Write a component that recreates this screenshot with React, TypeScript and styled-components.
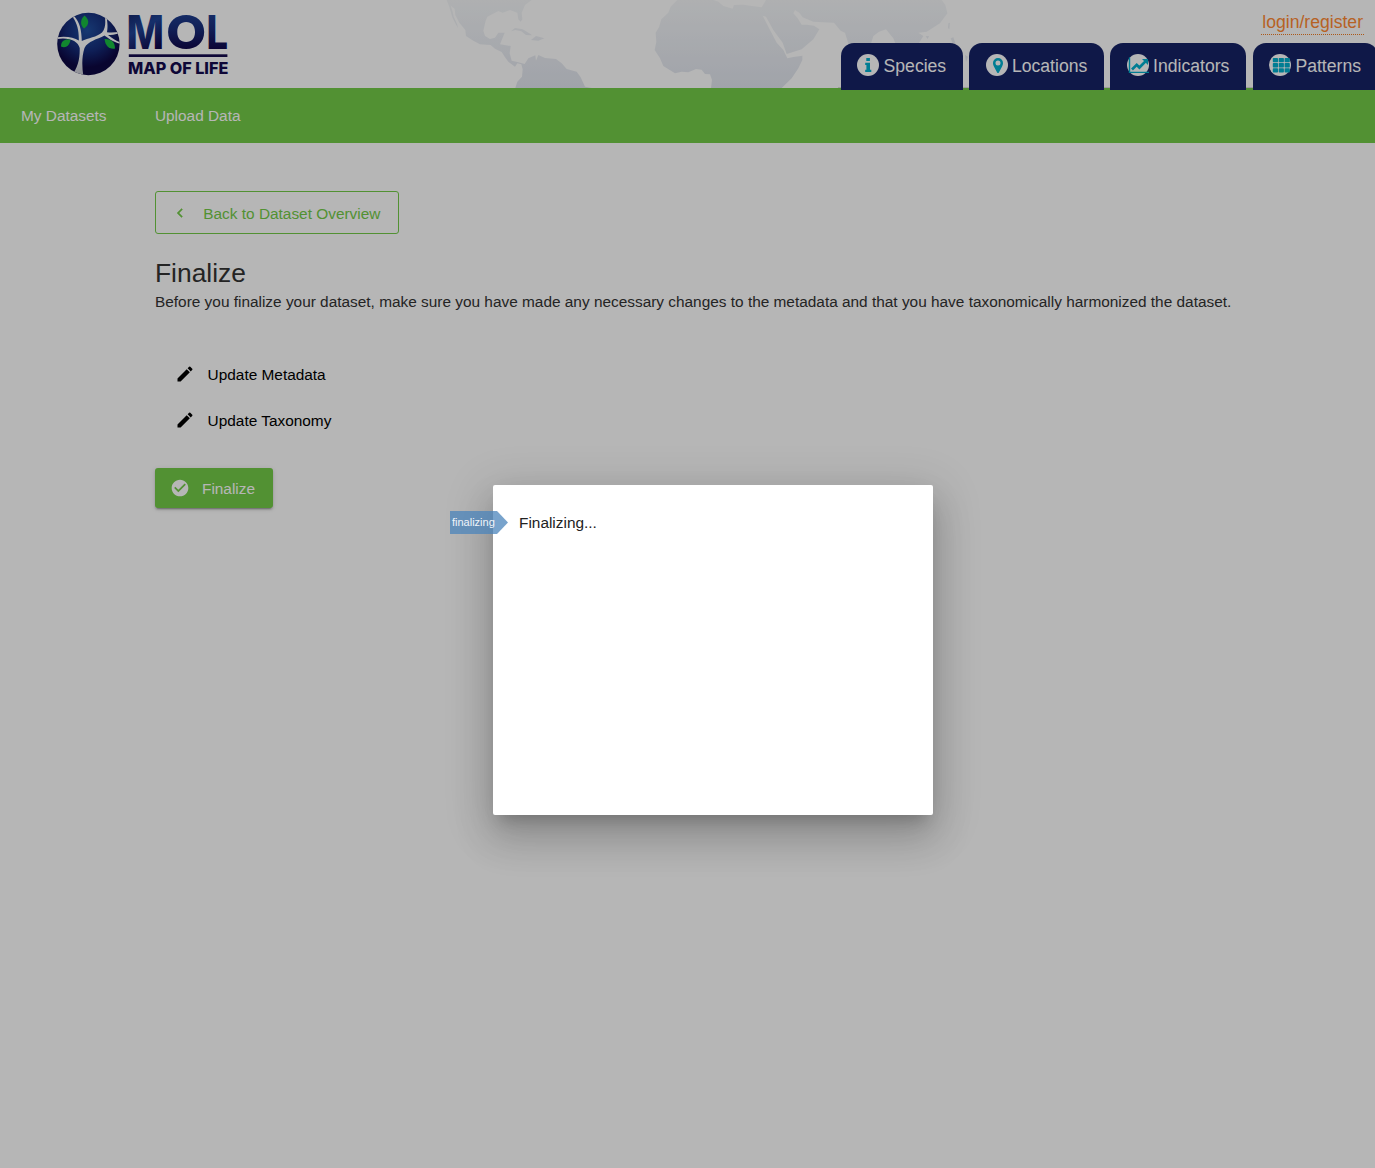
import React from "react";
import styled, { createGlobalStyle } from "styled-components";
import { MdCheckCircle, MdChevronLeft, MdEdit } from "react-icons/md";

const GREEN = "#73cc48";
const NAVY = "#152266";
const TEAL = "#00afcf";

const GlobalStyle = createGlobalStyle`
  *, *::before, *::after { box-sizing: border-box; }
  html, body { margin: 0; padding: 0; background: #fff; }
  body {
    font-family: "Liberation Sans", Arial, sans-serif;
    font-size: 15.4px;
    line-height: 20px;
    color: #333;
    overflow: hidden;
  }
`;

const Page = styled.div`
  position: relative;
  height: 1168px;
  overflow: hidden;
  background: #fff;
`;

const Header = styled.header`
  position: relative;
  display: flex;
  justify-content: space-between;
  height: 88px;
`;

const LogoLink = styled.a`
  display: block;
  padding-left: 53px;
  svg { display: block; overflow: visible; }
`;

const MapBackdrop = styled.svg`
  position: absolute;
  left: 430px;
  top: 0;
`;

const HeaderRight = styled.div`
  position: relative;
  z-index: 1;
  display: flex;
  flex-direction: column;
  align-items: flex-end;
  justify-content: space-between;
  width: 537px;
`;

const Login = styled.a`
  margin: 11px 11px 0 0;
  padding: 0 1px;
  height: 24px;
  line-height: 22px;
  font-size: 17.6px;
  color: #ff8a33;
  border-bottom: 1px dotted #f07c22;
`;

const Tabs = styled.nav`
  display: flex;
  gap: 6.4px;
  width: 100%;
  height: 45px;
  padding-left: 2.7px;
  border-bottom: 1px solid #ddd;
`;

const Tab = styled.a<{ $width: number }>`
  display: flex;
  align-items: center;
  flex: none;
  gap: 4.1px;
  width: ${(p) => p.$width}px;
  height: 47px;
  padding: 0 0 2px 16.8px;
  border-radius: 13px 13px 0 0;
  background: ${NAVY};
  color: #fff;
  font-size: 17.6px;
  svg { display: block; flex: none; overflow: visible; margin-top: -1px; }
`;

const NavBar = styled.nav`
  display: flex;
  align-items: center;
  gap: 48.4px;
  height: 55px;
  padding: 1px 21px 0;
  background: ${GREEN};
`;

const NavLink = styled.a`
  color: #fff;
`;

const Content = styled.main`
  display: flex;
  flex-direction: column;
  align-items: flex-start;
  padding: 48px 100px 0 155px;
`;

const BackButton = styled.button`
  display: flex;
  align-items: center;
  width: 244px;
  height: 43px;
  padding: 2px 0 0 15px;
  border: 1px solid ${GREEN};
  border-radius: 3px;
  background: transparent;
  color: ${GREEN};
  font: inherit;
  svg { margin: -2px 14.3px 0 0; }
  svg path:last-child { stroke: currentColor; stroke-width: 0.5px; }
`;

const Title = styled.h1`
  margin: 22px 0 0;
  font-size: 26.4px;
  line-height: 34px;
  font-weight: 400;
`;

const Lead = styled.p`
  margin: 2px 0 40px;
  white-space: nowrap;
`;

const EditLink = styled.a`
  display: flex;
  align-items: center;
  gap: 13px;
  height: 46px;
  padding: 0 19.6px;
  color: #000;
  svg { margin-top: -2px; }
`;

const FinalizeButton = styled.button`
  display: flex;
  align-items: center;
  width: 118px;
  height: 40px;
  margin-top: 24px;
  padding: 2px 0 0 14.6px;
  border: 0;
  border-radius: 3px;
  background: ${GREEN};
  color: #fff;
  font: inherit;
  box-shadow: 0 3px 1px -2px rgba(0, 0, 0, 0.2), 0 2px 2px 0 rgba(0, 0, 0, 0.14),
    0 1px 5px 0 rgba(0, 0, 0, 0.12);
  svg { margin: -3px 12.4px 0 0; }
`;

const Overlay = styled.div`
  position: absolute;
  inset: 0;
  z-index: 10;
  background: rgba(0, 0, 0, 0.288);
`;

const Dialog = styled.section`
  position: absolute;
  z-index: 11;
  left: 493px;
  top: 485px;
  width: 440px;
  height: 330px;
  padding: 28px 26px;
  border-radius: 2px;
  background: #fff;
  color: #222;
  box-shadow: 0 11px 15px -7px rgba(0, 0, 0, 0.2), 0 24px 38px 3px rgba(0, 0, 0, 0.14),
    0 9px 46px 8px rgba(0, 0, 0, 0.12);
`;

const StepFlag = styled.span`
  position: absolute;
  left: -43px;
  top: 26px;
  width: 58px;
  height: 23px;
  padding-left: 2px;
  background: rgba(75, 132, 187, 0.75);
  clip-path: polygon(0 0, 47px 0, 100% 50%, 47px 100%, 0 100%);
  color: #f0f5fa;
  font-size: 11px;
  line-height: 23px;
`;

function Logo() {
  return (
    <svg width="180" height="88" viewBox="53 0 180 88" aria-label="Map of Life">
      <defs>
        <radialGradient id="globe" cx="48%" cy="28%" r="66%">
          <stop offset="0" stopColor="#2050a0" />
          <stop offset="0.5" stopColor="#152d7b" />
          <stop offset="0.9" stopColor="#0d0743" />
        </radialGradient>
        <linearGradient id="word" gradientUnits="userSpaceOnUse" x1="130" y1="15" x2="150" y2="52">
          <stop offset="0" stopColor="#152a70" />
          <stop offset="0.4" stopColor="#1f4396" />
          <stop offset="1" stopColor="#100649" />
        </linearGradient>
        <linearGradient id="wordEnd" gradientUnits="userSpaceOnUse" x1="0" y1="15" x2="0" y2="50">
          <stop offset="0" stopColor="#1d3d8e" />
          <stop offset="0.4" stopColor="#182c7a" />
          <stop offset="1" stopColor="#100649" />
        </linearGradient>
        <linearGradient id="trunk" x1="0" y1="0" x2="0" y2="1">
          <stop offset="0.5" stopColor="#fff" />
          <stop offset="1" stopColor="#c3c5d0" />
        </linearGradient>
        <clipPath id="disc"><circle cx="88.4" cy="44" r="31.2" /></clipPath>
      </defs>
      <circle cx="88.4" cy="44" r="31.2" fill="url(#globe)" />
      <g clipPath="url(#disc)">
        <path
          fill="url(#trunk)"
          d="M71 76C78 68 80 58 79.700 48C78 41 69 37 57 39V37.300C66 35.800 74 37.500 78.800 40.500C79 31 77.500 24 73 17.500L74.500 16.500C80 23 81.500 30 81.800 41C88 38 97 37 102 32.500C106 28 105.500 21 104.800 16L106.500 17C108 24 107.500 29 107 32.300C112 32.800 116 32.300 120 31.800V33.300C115 34.700 111 35 108 35C112 38 116 41 120 42.300V43.700C113 42 108 38 104.500 35.500C97 39.500 88 41 84.500 48C81.500 57 82 68 83.500 77Z"
        />
      </g>
      <g fill="#18bd43">
        <path d="M84.500 15.500C79.500 20 80.500 26 84.200 28.500C89 25 90 20 84.500 15.500Z" />
        <path d="M61 46.500C61 40.500 65 38.800 70.500 39.800C69.500 46 65.500 48.500 61 46.500Z" />
        <path d="M104.500 39C111 38.500 115 42 115 48.500C109 49.500 105.500 46 104.500 39Z" />
      </g>
      <g fill="url(#wordEnd)" fontFamily="Inter, sans-serif" fontWeight="800">
        <g fontSize="46.5">
          <text x="126.500" y="49" textLength="37.500" lengthAdjust="spacingAndGlyphs" fill="url(#word)">M</text>
          <text x="166" y="49" textLength="40.300" lengthAdjust="spacingAndGlyphs">O</text>
          <text x="206.600" y="49" textLength="21.500" lengthAdjust="spacingAndGlyphs">L</text>
        </g>
        <rect x="128.800" y="54.300" width="98.600" height="2.700" fill="#140b4e" />
        <text x="128" y="74" fontSize="16.500" textLength="100.300" lengthAdjust="spacingAndGlyphs" fill="#140b4e">MAP OF LIFE</text>
      </g>
    </svg>
  );
}

function WorldMap() {
  return (
    <MapBackdrop width="560" height="88" viewBox="0 0 1680 264">
      <defs>
        <linearGradient id="land" gradientUnits="userSpaceOnUse" x1="0" y1="0" x2="0" y2="264">
          <stop offset="0" stopColor="#f5f7f9" />
          <stop offset="1" stopColor="#e1e5ee" />
        </linearGradient>
      </defs>
      <g fill="url(#land)">
        <path d="M54 0L60 16L74 26L76 45L88 68L106 90L108 108L130 122L150 133L182 135L195 146L215 156L225 172L235 185L255 200L262 190L274 193L278 208L276 230L262 245L256 264H485L465 260L452 232L440 215L410 207L395 190L378 177L345 174L325 165L318 182L316 166L295 175L284 192L262 186L245 182L239 160L242 138L210 133L224 98L205 98L195 113L180 117L165 108L160 92L167 62L172 50L205 33L218 38L240 30L262 38L265 58L272 65L277 58L275 38L285 15L305 0Z" />
        <path d="M50 0L58 20L67 52L76 70L84 84L81 72L71 50L68 36L63 20L58 0Z" />
        <path d="M243 94L255 84L278 88L300 101L306 106L288 105L274 94L256 90Z" />
        <path d="M303 120L318 108L343 115L325 122Z" />
        <path d="M742 0L722 20L715 38L694 58L687 82L677 98L679 125L674 150L690 175L700 198L735 220L755 215L775 217L798 207L815 209L825 222L840 223L846 240L843 264H1055L1085 235L1105 205L1117 180L1117 167L1090 171L1072 175L1060 150L1040 128L1020 90L998 47L1008 50L1030 90L1058 128L1070 162L1115 148L1150 118L1168 88L1152 77L1130 74L1115 74L1103 55L1090 40L1095 30L1108 38L1118 52L1150 65L1212 68L1232 92L1245 98L1258 140L1320 140L1330 108L1347 95L1368 88L1390 115L1400 140H1460L1480 108L1465 98L1490 95L1530 70L1552 40L1546 15L1535 0H1008L995 22L965 18L940 14L912 15L908 26L880 18L865 5L850 0Z" />
        <path d="M1487 109L1497 108L1493 117ZM1555 70L1560 68L1558 88L1554 84ZM1562 115L1570 112L1577 132L1567 128ZM1605 165L1614 170L1608 186Z" />
      </g>
    </MapBackdrop>
  );
}

type Glyph = "info" | "pin" | "chart" | "grid";

function TabIcon({ glyph }: { glyph: Glyph }) {
  return (
    <svg width="22" height="22" viewBox="0 0 22 22">
      <circle cx="11" cy="11" r="11" fill="#fff" />
      {glyph === "info" && (
        <path fill={TEAL} d="M9.300 4H12.900V7H9.300ZM8.200 8.800H13V15.700H14.300V18H8.200V15.700H9.400V11.100H8.200Z" />
      )}
      {glyph === "pin" && (
        <path
          fill={TEAL}
          fillRule="evenodd"
          d="M12 4A5 5 0 0 1 17 9C17 10.500 16.600 11.300 16.200 12.200L12.900 18.400Q12 19.600 11.100 18.400L7.800 12.200C7.400 11.300 7 10.500 7 9A5 5 0 0 1 12 4ZM12 6.500A2.500 2.500 0 1 0 12 11.500A2.500 2.500 0 1 0 12 6.500Z"
        />
      )}
      {glyph === "chart" && (
        <g fill="none" stroke={TEAL}>
          <path strokeWidth="1.400" d="M2.500 3.500V18.400H22" />
          <path strokeWidth="2.700" d="M5 15.500L9.700 10.800L12.400 13.500L19 6.900" />
          <path fill={TEAL} stroke="none" d="M15 5H21V11Z" />
        </g>
      )}
      {glyph === "grid" && (
        <g fill={TEAL}>
          {[4, 9.100, 14.200].map((y) =>
            [3.800, 9.700, 15.600].map((x) => (
              <rect key={`${x}-${y}`} x={x} y={y} width="5.200" height="4.300" rx="0.700" />
            ))
          )}
        </g>
      )}
    </svg>
  );
}

const tabs: { label: string; glyph: Glyph; width: number }[] = [
  { label: "Species", glyph: "info", width: 122 },
  { label: "Locations", glyph: "pin", width: 134.7 },
  { label: "Indicators", glyph: "chart", width: 136 },
  { label: "Patterns", glyph: "grid", width: 125 },
];

export default function App() {
  return (
    <Page>
      <GlobalStyle />
      <Header>
        <WorldMap />
        <LogoLink><Logo /></LogoLink>
        <HeaderRight>
          <Login>login/register</Login>
          <Tabs>
            {tabs.map((tab) => (
              <Tab key={tab.label} $width={tab.width}>
                <TabIcon glyph={tab.glyph} />
                {tab.label}
              </Tab>
            ))}
          </Tabs>
        </HeaderRight>
      </Header>
      <NavBar>
        <NavLink>My Datasets</NavLink>
        <NavLink>Upload Data</NavLink>
      </NavBar>
      <Content>
        <BackButton><MdChevronLeft size={18} />Back to Dataset Overview</BackButton>
        <Title>Finalize</Title>
        <Lead>
          Before you finalize your dataset, make sure you have made any necessary changes to the
          metadata and that you have taxonomically harmonized the dataset.
        </Lead>
        <EditLink><MdEdit size={20} />Update Metadata</EditLink>
        <EditLink><MdEdit size={20} />Update Taxonomy</EditLink>
        <FinalizeButton><MdCheckCircle size={20} />Finalize</FinalizeButton>
      </Content>
      <Overlay />
      <Dialog>
        <StepFlag>finalizing</StepFlag>
        Finalizing...
      </Dialog>
    </Page>
  );
}
